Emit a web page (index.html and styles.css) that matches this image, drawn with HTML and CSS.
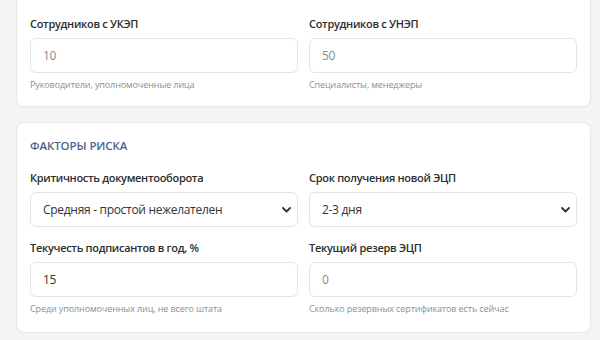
FILE: index.html
```html
<!DOCTYPE html>
<html lang="ru">
<head>
    <meta charset="UTF-8">
    <meta name="viewport" content="width=device-width, initial-scale=1.0">
    <title>Расчёт резерва ЭЦП</title>
    <link rel="stylesheet" href="styles.css">
</head>
<body>
    <div class="page">
        <div class="card card-cont">
            <div class="grid">
                <div class="field">
                    <label class="label" for="ukep">Сотрудников с УКЭП</label>
                    <input class="input" type="number" id="ukep" placeholder="10">
                    <div class="hint">Руководители, уполномоченные лица</div>
                </div>
                <div class="field">
                    <label class="label" for="unep">Сотрудников с УНЭП</label>
                    <input class="input" type="number" id="unep" placeholder="50">
                    <div class="hint">Специалисты, менеджеры</div>
                </div>
            </div>
        </div>

        <div class="card">
            <div class="section-title">Факторы риска</div>
            <div class="grid">
                <div class="field">
                    <label class="label" for="crit">Критичность документооборота</label>
                    <div class="select-wrap">
                        <select class="input select" id="crit">
                            <option>Средняя - простой нежелателен</option>
                            <option>Низкая</option>
                            <option>Высокая</option>
                        </select>
                        <svg class="chevron" width="9" height="6" viewBox="0 0 9 6"><path d="M1 1l3.5 3.5L8 1" fill="none" stroke="#333" stroke-width="1.8" stroke-linecap="round" stroke-linejoin="round"/></svg>
                    </div>
                </div>
                <div class="field">
                    <label class="label" for="term">Срок получения новой ЭЦП</label>
                    <div class="select-wrap">
                        <select class="input select" id="term">
                            <option>2-3 дня</option>
                            <option>1 день</option>
                            <option>Неделя</option>
                        </select>
                        <svg class="chevron" width="9" height="6" viewBox="0 0 9 6"><path d="M1 1l3.5 3.5L8 1" fill="none" stroke="#333" stroke-width="1.8" stroke-linecap="round" stroke-linejoin="round"/></svg>
                    </div>
                </div>
                <div class="field">
                    <label class="label" for="turn">Текучесть подписантов в год, %</label>
                    <input class="input" type="number" id="turn" value="15">
                    <div class="hint">Среди уполномоченных лиц, не всего штата</div>
                </div>
                <div class="field">
                    <label class="label" for="res">Текущий резерв ЭЦП</label>
                    <input class="input" type="number" id="res" placeholder="0">
                    <div class="hint">Сколько резервных сертификатов есть сейчас</div>
                </div>
            </div>
        </div>
    </div>
</body>
</html>
```

FILE: styles.css
```css
body { margin: 0; padding: 0; background-color: #f5f4f2; color: #2d2d2d; font-family: "Open Sans", "Noto Sans", sans-serif; }
.page { margin: -24px 9px 0 16px; display: flex; flex-direction: column; gap: 15px; }
.card { background: #fff; border: 1px solid #e9e7e4; border-radius: 8px; padding: 15px 13px 16px; box-shadow: 0 1px 2px rgba(0, 0, 0, 0.03); }
.card-cont { padding-top: 39px; padding-bottom: 14px; }
.section-title { font-size: 11.5px; line-height: 16px; font-weight: 600; color: #4a6488; text-transform: uppercase; letter-spacing: -0.1px; margin-bottom: 16px; }
.grid { display: grid; grid-template-columns: 1fr 1fr; column-gap: 11px; row-gap: 13px; }
.field { display: flex; flex-direction: column; min-width: 0; }
.label { font-size: 11px; line-height: 16px; font-weight: 600; color: #2d2d2d; letter-spacing: -0.3px; margin-bottom: 6px; }
.input { box-sizing: border-box; height: 35px; width: 100%; border: 1px solid #e6e4e1; border-radius: 6px; background: #fff; padding: 0 12px; font-family: inherit; font-size: 12px; letter-spacing: -0.3px; color: #333; outline: none; }
.input::placeholder { color: #8b8b8b; }
.input::-webkit-outer-spin-button, .input::-webkit-inner-spin-button { -webkit-appearance: none; margin: 0; }
.select-wrap { position: relative; }
.select { appearance: none; -webkit-appearance: none; padding-right: 28px; }
.chevron { position: absolute; right: 7px; top: 15px; pointer-events: none; }
.hint { font-size: 9px; line-height: 14px; color: #8a8f99; letter-spacing: -0.1px; margin-top: 5px; }
```
